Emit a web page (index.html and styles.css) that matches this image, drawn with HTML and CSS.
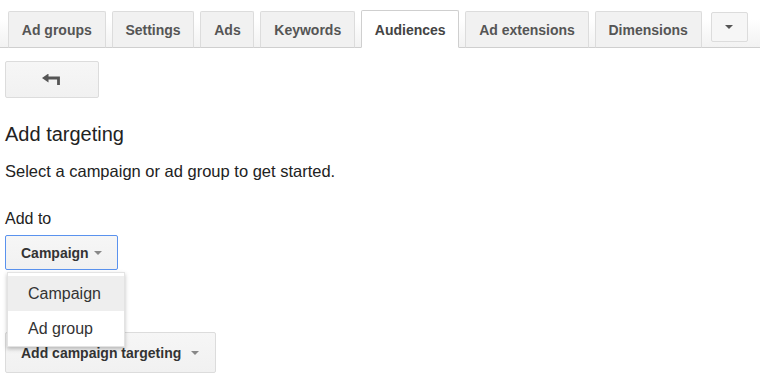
FILE: index.html
```html
<!DOCTYPE html>
<html>
<head>
<meta charset="utf-8">
<link rel="stylesheet" href="styles.css">
</head>
<body>
<div class="tabstrip">
  <div class="tab">Ad groups</div>
  <div class="tab">Settings</div>
  <div class="tab">Ads</div>
  <div class="tab">Keywords</div>
  <div class="tab active">Audiences</div>
  <div class="tab">Ad extensions</div>
  <div class="tab">Dimensions</div>
  <div class="more"><span class="tri"></span></div>
</div>
<div class="content">
  <button class="btn back">
    <svg width="20" height="12" viewBox="0 0 20 12"><path d="M0 4 L6.5 -0.5 L6.5 8.5 Z" fill="#555"/><path d="M5 4 H16.5 V11" stroke="#555" stroke-width="2.8" fill="none"/></svg>
  </button>
  <h1 class="title">Add targeting</h1>
  <p class="desc">Select a campaign or ad group to get started.</p>
  <div class="label">Add to</div>
  <div class="select-wrap">
    <button class="btn select focused">Campaign <span class="tri light"></span></button>
    <div class="menu">
      <div class="item hover">Campaign</div>
      <div class="item">Ad group</div>
    </div>
  </div>
  <button class="btn select big">Add campaign targeting <span class="tri light wide"></span></button>
</div>
</body>
</html>
```
FILE: styles.css
```css
* { box-sizing: border-box; }
body {
  margin: 0;
  font-family: "Liberation Sans", Arial, sans-serif;
  color: #222;
  background: #fff;
}
.tabstrip {
  display: flex;
  align-items: flex-end;
  gap: 6px;
  padding: 10px 0 0 8px;
  height: 48px;
  border-bottom: 1px solid #cfcfcf;
  background: linear-gradient(to bottom, #fff 40%, #f2f2f2 100%);
}
.tab {
  height: 37px;
  margin-bottom: -1px;
  padding: 1px 12.8px 0;
  display: flex;
  align-items: center;
  font-size: 14px;
  font-weight: bold;
  color: #555;
  background: #f1f1f1;
  border: 1px solid #dcdcdc;
  border-bottom: 1px solid #cfcfcf;
  border-radius: 2px 2px 0 0;
}
.tab.active {
  background: #fff;
  border-color: #cfcfcf;
  border-bottom-color: #fff;
  color: #444;
  height: 38px;
}
.more {
  align-self: flex-start;
  margin-top: 2px;
  margin-left: 3px;
  width: 37px;
  height: 30px;
  border: 1px solid #dcdcdc;
  border-radius: 2px;
  background: #f6f6f6;
  display: flex;
  align-items: center;
  justify-content: center;
}
.tri {
  display: inline-block;
  width: 0;
  height: 0;
  border-left: 4px solid transparent;
  border-right: 4px solid transparent;
  border-top: 4px solid #555;
}
.tri.light { border-top-color: #888; vertical-align: 2px; margin-left: 5px; }
.tri.wide { margin-left: 10px; }
.content {
  padding: 13px 0 0 5px;
  position: relative;
}
.btn {
  display: flex;
  align-items: center;
  font-family: "Liberation Sans", Arial, sans-serif;
  background: linear-gradient(to bottom, #f6f6f6, #f1f1f1);
  border: 1px solid #dcdcdc;
  border-radius: 2px;
  color: #333;
  padding: 0;
}
.back {
  width: 94px;
  height: 37px;
  justify-content: center;
}
.title {
  margin: 24px 0 0;
  font-size: 20px;
  line-height: 24px;
  font-weight: normal;
  color: #222;
}
.desc {
  margin: 15px 0 0;
  font-size: 16.5px;
  line-height: 20px;
  color: #222;
}
.label {
  margin-top: 28px;
  font-size: 16px;
  line-height: 20px;
  color: #222;
}
.select-wrap {
  position: relative;
  margin-top: 6px;
  width: 113px;
}
.select {
  height: 35px;
  padding: 0 15px;
  font-size: 14px;
  font-weight: bold;
  white-space: nowrap;
}
.select.focused {
  width: 113px;
  border-color: #5a92ee;
}
.menu {
  position: absolute;
  left: 2px;
  top: 37px;
  width: 118px;
  background: #fff;
  padding: 3px 0 0;
  box-shadow: 0 2px 4px rgba(0,0,0,0.25);
  border: 1px solid #e3e3e3;
  z-index: 2;
}
.item {
  height: 35px;
  padding-left: 20px;
  display: flex;
  align-items: center;
  font-size: 16px;
  color: #333;
}
.item.hover { background: #eeeeee; }
.big {
  margin-top: 62px;
  height: 41px;
  width: 211px;
}
```
